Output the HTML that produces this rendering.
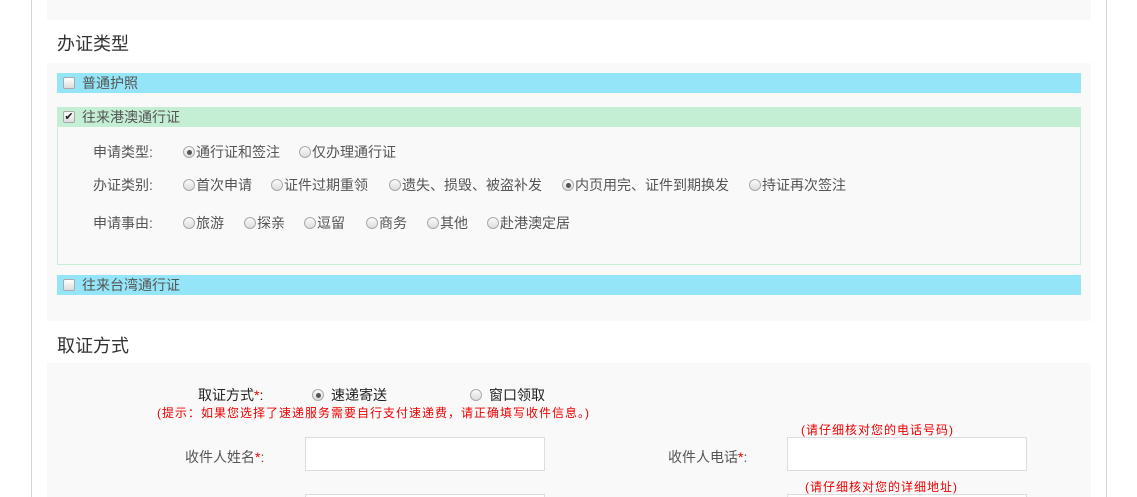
<!DOCTYPE html>
<html style="overflow:hidden;height:497px"><head><meta charset="utf-8"><style>
*{margin:0;padding:0;box-sizing:border-box}
body{width:1137px;height:497px;overflow:hidden;background:#fff;font-family:"Liberation Sans","Microsoft YaHei","Noto Sans CJK SC",sans-serif;color:#555;font-size:14px;position:relative}
.a{position:absolute;white-space:nowrap}
.wrap{left:31px;top:0;width:1076px;height:497px;border-left:1px solid #d4d4d4;border-right:1px solid #d4d4d4}
.gp{background:#f9f9f9;left:47px;width:1044px}
.h{font-size:18px;color:#333}
.bar{left:57px;width:1024px;height:20px;line-height:20px;padding-left:25px;font-size:14px;color:#555}
.cb{position:absolute;left:6px;top:4px;width:12px;height:12px;border:1px solid #aaa;border-radius:2px;background:linear-gradient(#fff,#ddd)}
.r{display:inline-block;width:12px;height:12px;border:1px solid #aaa;border-radius:50%;background:linear-gradient(#fafafa,#ddd);vertical-align:-1px;margin-right:1px;position:relative}
.r.on::after{content:"";position:absolute;left:2.5px;top:2.5px;width:5px;height:5px;border-radius:50%;background:#555}
.red{color:#e00}
.hint{font-size:12px;letter-spacing:1px}
.in{position:absolute;width:240px;height:34px;border:1px solid #ddd;background:#fff}
</style></head><body>
<div class="a wrap"></div>
<div class="a gp" style="top:0;height:20px"></div>
<div class="a h" style="left:57px;top:30px">办证类型</div>
<div class="a gp" style="top:63px;height:258px"></div>
<div class="a bar" style="top:73px;background:#95e5f9"><span class="cb"></span>普通护照</div>
<div class="a" style="left:57px;top:107px;width:1024px;height:158px;border:1px solid #c5efd5;background:#f9f9f9"></div>
<div class="a bar" style="top:107px;background:#c5efd5"><span class="cb" style="font-size:11px;line-height:10px;text-align:center;color:#222">✔</span>往来港澳通行证</div>
<div class="a" style="left:93px;top:142px">申请类型:</div>
<div class="a" style="left:183px;top:142px"><span class="r on"></span>通行证和签注</div>
<div class="a" style="left:299px;top:142px"><span class="r"></span>仅办理通行证</div>
<div class="a" style="left:93px;top:175px">办证类别:</div>
<div class="a" style="left:183px;top:175px"><span class="r"></span>首次申请</div>
<div class="a" style="left:271px;top:175px"><span class="r"></span>证件过期重领</div>
<div class="a" style="left:389px;top:175px"><span class="r"></span>遗失、损毁、被盗补发</div>
<div class="a" style="left:562px;top:175px"><span class="r on"></span>内页用完、证件到期换发</div>
<div class="a" style="left:749px;top:175px"><span class="r"></span>持证再次签注</div>
<div class="a" style="left:93px;top:213px">申请事由:</div>
<div class="a" style="left:183px;top:213px"><span class="r"></span>旅游</div>
<div class="a" style="left:244px;top:213px"><span class="r"></span>探亲</div>
<div class="a" style="left:304px;top:213px"><span class="r"></span>逗留</div>
<div class="a" style="left:366px;top:213px"><span class="r"></span>商务</div>
<div class="a" style="left:427px;top:213px"><span class="r"></span>其他</div>
<div class="a" style="left:487px;top:213px"><span class="r"></span>赴港澳定居</div>
<div class="a bar" style="top:275px;background:#95e5f9"><span class="cb"></span>往来台湾通行证</div>
<div class="a h" style="left:57px;top:332px">取证方式</div>
<div class="a gp" style="top:363px;height:134px"></div>
<div class="a" style="left:198px;top:385px;color:#222">取证方式<span class="red">*</span>:</div>
<div class="a" style="left:312px;top:385px;color:#222"><span class="r on" style="margin-right:7px"></span>速递寄送</div>
<div class="a" style="left:470px;top:385px;color:#222"><span class="r" style="margin-right:7px"></span>窗口领取</div>
<div class="a red hint" style="left:157px;top:404px">(提示：如果您选择了速递服务需要自行支付速递费，请正确填写收件信息。)</div>
<div class="a red hint" style="left:801px;top:421px">(请仔细核对您的电话号码)</div>
<div class="a" style="left:185px;top:447px">收件人姓名<span class="red">*</span>:</div>
<div class="in" style="left:305px;top:437px"></div>
<div class="a" style="left:668px;top:447px">收件人电话<span class="red">*</span>:</div>
<div class="in" style="left:787px;top:437px"></div>
<div class="a red hint" style="left:805px;top:478px">(请仔细核对您的详细地址)</div>
<div class="in" style="left:305px;top:494px;height:3px;border-bottom:none"></div>
<div class="in" style="left:787px;top:494px;height:3px;border-bottom:none"></div>
</body></html>
